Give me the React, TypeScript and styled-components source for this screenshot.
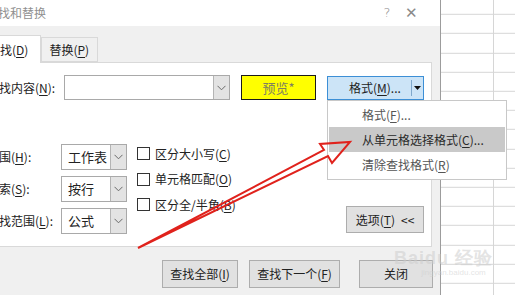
import {FC} from 'react';
import styled, {createGlobalStyle} from 'styled-components';

const GlobalStyle = createGlobalStyle`
  html, body {
    margin: 0;
    padding: 0;
    background: #ffffff;
  }
  body {
    font-family: "Noto Sans CJK SC", "Noto Sans", sans-serif;
    font-size: 12px;
    color: #222222;
  }
  * {
    box-sizing: border-box;
  }
`;

const Screen = styled.div`
  position: relative;
  display: flex;
  width: 515px;
  height: 295px;
  overflow: hidden;
  background: #ffffff;
`;

const Dialog = styled.div`
  flex: 0 0 461px;
  margin-left: -20px;
  display: flex;
  flex-direction: column;
  background: #f0f0f0;
  border-right: 1px solid #9c9c9c;
`;

const TitleBar = styled.div`
  height: 26px;
  display: flex;
  align-items: center;
  padding-left: 6px;
  background: #ffffff;
`;

const Title = styled.span`
  flex: 1;
  color: #8f8f8f;
  font-size: 12px;
  line-height: 14px;
`;

const TitleIcon = styled.span<{$size: number; $width: number}>`
  width: ${p => p.$width}px;
  text-align: center;
  color: #8a8a8a;
  font-size: ${p => p.$size}px;
  line-height: 14px;
  font-family: "DejaVu Sans", sans-serif;
  font-weight: 300;
`;

const TabStrip = styled.div`
  height: 36px;
  display: flex;
  align-items: flex-end;
  padding-left: 1px;
`;

const Tab = styled.div<{$active?: boolean}>`
  height: ${p => (p.$active ? 28 : 25)}px;
  margin-bottom: ${p => (p.$active ? -1 : 0)}px;
  padding: ${p => (p.$active ? '6px 12px 0 7px' : '4px 8px 0 7px')};
  background: ${p => (p.$active ? '#ffffff' : '#f0f0f0')};
  border: 1px solid #d9d9d9;
  border-bottom: ${p => (p.$active ? 'none' : '1px solid #d9d9d9')};
  border-left: ${p => (p.$active ? 'none' : '1px solid #d9d9d9')};
  font-size: 12px;
  line-height: 16px;
  z-index: ${p => (p.$active ? 1 : 0)};
  position: relative;
`;

const Key = styled.span`
  text-decoration: underline;
  text-underline-offset: 2px;
`;

const Panel = styled.div`
  height: 185px;
  margin-right: 8px;
  display: flex;
  flex-direction: column;
  padding: 12px 7px 12px 7px;
  background: #ffffff;
  border: 1px solid #d9d9d9;
  border-left: none;
`;

const FindRow = styled.div`
  display: flex;
  align-items: center;
  height: 25px;
`;

const Label = styled.span<{$width: number}>`
  width: ${p => p.$width}px;
  flex: 0 0 ${p => p.$width}px;
  font-size: 12px;
  line-height: 14px;
  white-space: nowrap;
`;

const Combo = styled.div<{$width: number; $height: number}>`
  width: ${p => p.$width}px;
  height: ${p => p.$height}px;
  display: flex;
  background: #ffffff;
  border: 1px solid #a9a9a9;
`;

const ComboValue = styled.span`
  flex: 1;
  padding-left: 6px;
  font-size: 13px;
  line-height: 24px;
  white-space: nowrap;
`;

const ComboButton = styled.span`
  width: 16px;
  display: flex;
  align-items: center;
  justify-content: center;
  background: #e3e3e3;
  border-left: 1px solid #b4b4b4;
`;

const Preview = styled.div`
  width: 75px;
  height: 25px;
  margin-left: 11px;
  display: flex;
  align-items: center;
  justify-content: center;
  background: #ffff00;
  border: 1px solid #1a1a1a;
  color: #808060;
  font-size: 13px;
`;

const FormatButton = styled.div`
  width: 97px;
  height: 24px;
  margin-left: auto;
  display: flex;
  align-items: center;
  background: #cce4f7;
  border: 1px solid #3c8fd6;
  font-size: 12px;
`;

const FormatLabel = styled.span`
  flex: 1;
  padding-left: 21px;
  line-height: 14px;
`;

const SplitLine = styled.span`
  width: 1px;
  height: 16px;
  background: #7fa8cc;
`;

const SplitArrow = styled.span`
  width: 11px;
  display: flex;
  justify-content: center;
`;

const OptionsRow = styled.div`
  display: flex;
  margin-top: 44px;
  height: 91px;
`;

const SelectColumn = styled.div`
  display: flex;
  flex-direction: column;
  gap: 6px;
`;

const SelectRow = styled.div`
  display: flex;
  align-items: center;
`;

const CheckColumn = styled.div`
  display: flex;
  flex-direction: column;
  margin-left: 10px;
  margin-top: -3px;
`;

const CheckRow = styled.label`
  height: 25.5px;
  display: flex;
  align-items: center;
  gap: 5px;
  font-size: 12px;
  line-height: 14px;
`;

const CheckBox = styled.span`
  width: 13px;
  height: 13px;
  border: 1px solid #333333;
  background: #ffffff;
`;

const PlainButton = styled.div<{$width: number; $height: number}>`
  width: ${p => p.$width}px;
  height: ${p => p.$height}px;
  display: flex;
  align-items: center;
  justify-content: center;
  gap: 6px;
  background: #e1e1e1;
  border: 1px solid #adadad;
  font-size: 12px;
  line-height: 14px;
  white-space: nowrap;
`;

const OptionsButton = styled(PlainButton)`
  margin-left: auto;
  align-self: flex-end;
  margin-bottom: 1px;
`;

const Footer = styled.div`
  flex: 1;
  display: flex;
  justify-content: flex-end;
  align-items: flex-start;
  padding: 13px 7px 0 0;
`;

const FooterGap = styled.span<{$width: number}>`
  width: ${p => p.$width}px;
`;

const Sheet = styled.div`
  flex: 1;
  background-color: #ffffff;
  background-image:
    linear-gradient(to right, transparent 52px, #d6d6d6 52px, #d6d6d6 53px, transparent 53px),
    repeating-linear-gradient(to bottom, transparent 0, transparent 18.2px, #d6d6d6 18.2px, #d6d6d6 19.2px);
  background-position: 0 0, 0 -4.2px;
`;

const Menu = styled.div`
  position: absolute;
  left: 327px;
  top: 100px;
  width: 180px;
  height: 80px;
  padding: 1px 1px 2px;
  background: #ffffff;
  border: 1px solid #c8c8c8;
  z-index: 2;
`;

const MenuItem = styled.div<{$hover?: boolean}>`
  height: 25px;
  display: flex;
  align-items: center;
  padding-left: 33px;
  background: ${p => (p.$hover ? '#c9c9c9' : 'transparent')};
  color: ${p => (p.$hover ? '#2a2a2a' : '#555555')};
  font-size: 12px;
  white-space: nowrap;
`;

const Arrow = styled.svg`
  position: absolute;
  left: 0;
  top: 0;
  z-index: 3;
  pointer-events: none;
`;

const Watermark = styled.div`
  position: absolute;
  left: 394px;
  top: 249px;
  display: flex;
  flex-direction: column;
  align-items: center;
  color: rgba(205, 205, 205, 0.55);
  z-index: 1;
  pointer-events: none;
`;

const WatermarkTitle = styled.span`
  font-family: "Liberation Sans", sans-serif;
  font-weight: bold;
  font-size: 18px;
  line-height: 19px;
  letter-spacing: 1px;
`;

const WatermarkSub = styled.span`
  font-family: "Liberation Sans", sans-serif;
  font-size: 8px;
  line-height: 9px;
  margin-left: 20px;
`;

const Chevron: FC = () => (
  <svg width="9" height="6" viewBox="0 0 9 6">
    <path d="M0.5 0.8 L4.5 4.8 L8.5 0.8" fill="none" stroke="#6a6a6a" strokeWidth="1" />
  </svg>
);

const Caret: FC = () => (
  <svg width="7" height="4" viewBox="0 0 7 4">
    <path d="M0 0 H7 L3.5 4 Z" fill="#111111" />
  </svg>
);

interface ISelectProps {
  label: string;
  keyName: string;
  prefix: string;
  value: string;
}

const SelectField: FC<ISelectProps> = ({keyName, prefix, value}) => (
  <SelectRow>
    <Label $width={74}>
      {prefix}(<Key>{keyName}</Key>):
    </Label>
    <Combo $width={66} $height={26}>
      <ComboValue>{value}</ComboValue>
      <ComboButton>
        <Chevron />
      </ComboButton>
    </Combo>
  </SelectRow>
);

const selects: ISelectProps[] = [
  {label: 'within', prefix: '范围', keyName: 'H', value: '工作表'},
  {label: 'search', prefix: '搜索', keyName: 'S', value: '按行'},
  {label: 'lookin', prefix: '查找范围', keyName: 'L', value: '公式'},
];

const checks = [
  {text: '区分大小写', keyName: 'C'},
  {text: '单元格匹配', keyName: 'O'},
  {text: '区分全/半角', keyName: 'B'},
];

const App: FC = () => (
  <>
    <GlobalStyle />
    <Screen>
      <Dialog>
        <TitleBar>
          <Title>查找和替换</Title>
          <TitleIcon $size={13} $width={14}>?</TitleIcon>
          <TitleIcon $size={15} $width={34}>✕</TitleIcon>
          <TitleIcon $size={12} $width={12}></TitleIcon>
        </TitleBar>
        <TabStrip>
          <Tab $active>
            查找(<Key>D</Key>)
          </Tab>
          <Tab>
            替换(<Key>P</Key>)
          </Tab>
        </TabStrip>
        <Panel>
          <FindRow>
            <Label $width={77}>
              查找内容(<Key>N</Key>):
            </Label>
            <Combo $width={166} $height={25}>
              <ComboValue />
              <ComboButton>
                <Chevron />
              </ComboButton>
            </Combo>
            <Preview>预览*</Preview>
            <FormatButton>
              <FormatLabel>
                格式(<Key>M</Key>)...
              </FormatLabel>
              <SplitLine />
              <SplitArrow>
                <Caret />
              </SplitArrow>
            </FormatButton>
          </FindRow>
          <OptionsRow>
            <SelectColumn>
              {selects.map(s => (
                <SelectField key={s.label} {...s} />
              ))}
            </SelectColumn>
            <CheckColumn>
              {checks.map(c => (
                <CheckRow key={c.keyName}>
                  <CheckBox />
                  <span>
                    {c.text}(<Key>{c.keyName}</Key>)
                  </span>
                </CheckRow>
              ))}
            </CheckColumn>
            <OptionsButton $width={78} $height={27}>
              <span>
                选项(<Key>T</Key>)
              </span>
              <span>&lt;&lt;</span>
            </OptionsButton>
          </OptionsRow>
        </Panel>
        <Footer>
          <PlainButton $width={76} $height={28}>
            <span>
              查找全部(<Key>I</Key>)
            </span>
          </PlainButton>
          <FooterGap $width={11} />
          <PlainButton $width={91} $height={28}>
            <span>
              查找下一个(<Key>F</Key>)
            </span>
          </PlainButton>
          <FooterGap $width={19} />
          <PlainButton $width={74} $height={28}>
            <span>关闭</span>
          </PlainButton>
        </Footer>
      </Dialog>
      <Sheet />
      <Menu>
        <MenuItem>
          <span>
            格式(<Key>F</Key>)...
          </span>
        </MenuItem>
        <MenuItem $hover>
          <span>
            从单元格选择格式(<Key>C</Key>)...
          </span>
        </MenuItem>
        <MenuItem>
          <span>
            清除查找格式(<Key>R</Key>)
          </span>
        </MenuItem>
      </Menu>
      <Watermark>
        <WatermarkTitle>Baidu 经验</WatermarkTitle>
        <WatermarkSub>jingyan.baidu.com</WatermarkSub>
      </Watermark>
      <Arrow width="515" height="295" viewBox="0 0 515 295">
        <polygon
          points="138,248 324,150 320,144 350,142 332,163 328,156"
          fill="none"
          stroke="#e0221c"
          strokeWidth="2"
          strokeLinejoin="miter"
        />
      </Arrow>
    </Screen>
  </>
);

export default App;
